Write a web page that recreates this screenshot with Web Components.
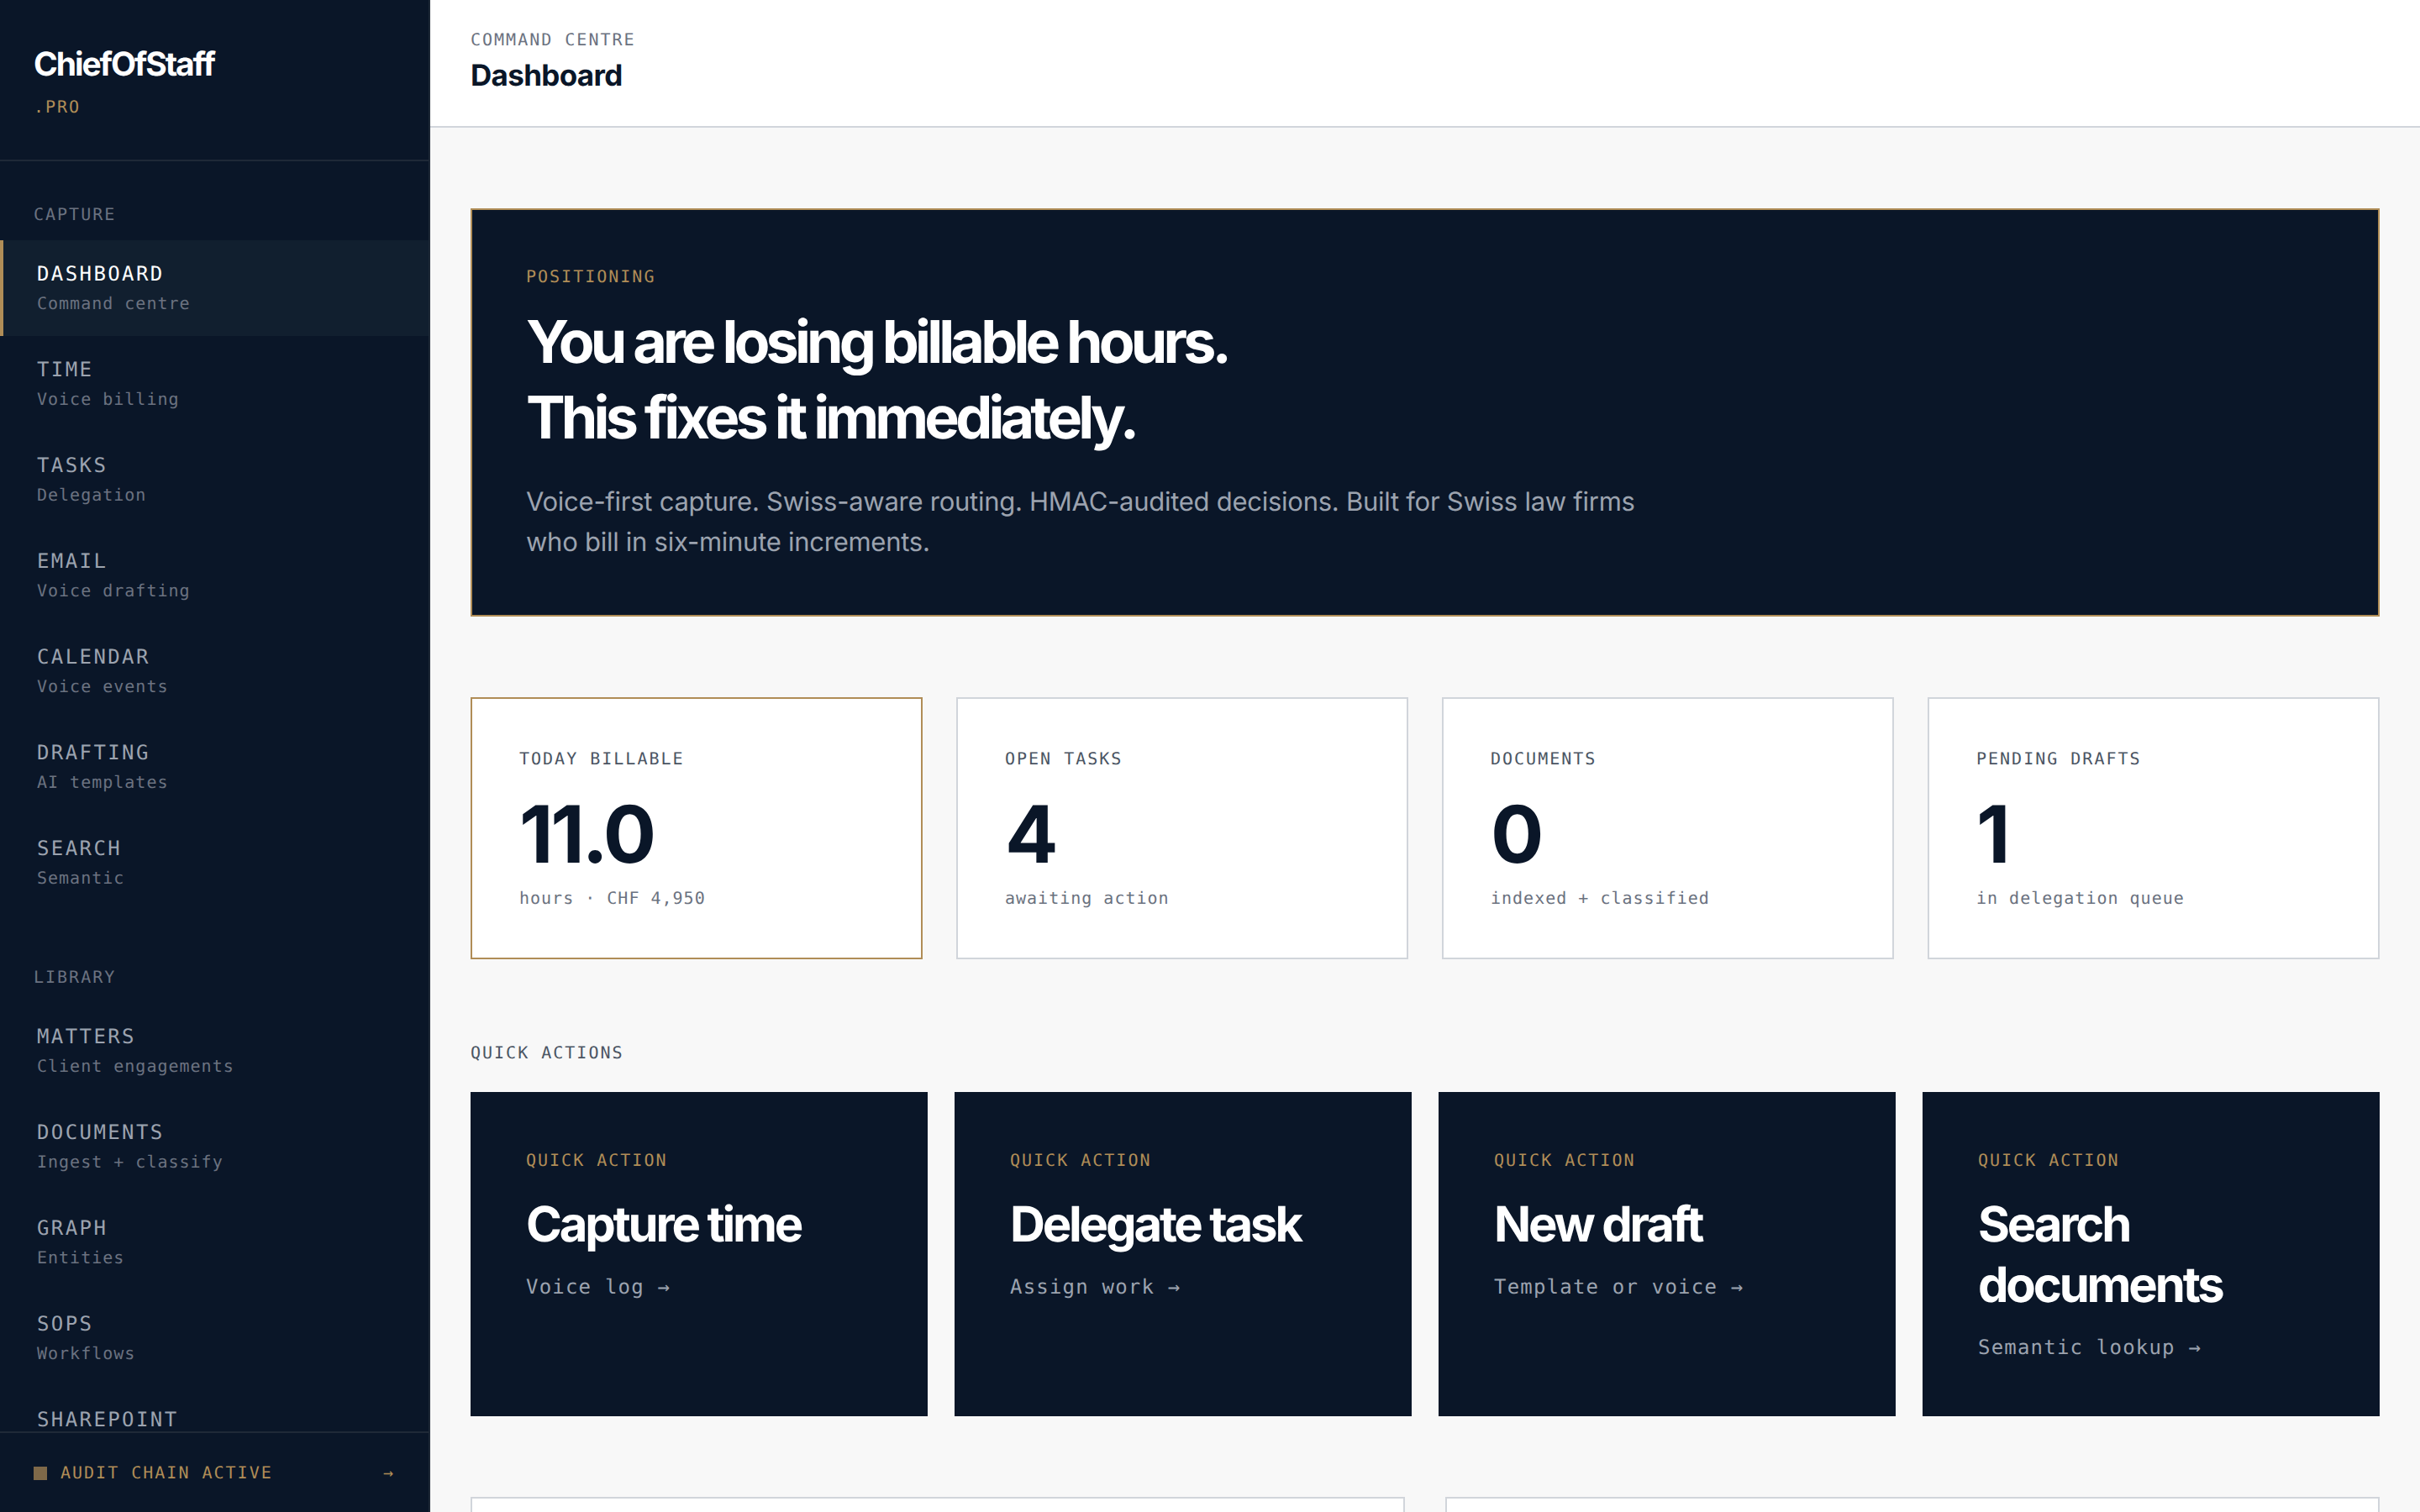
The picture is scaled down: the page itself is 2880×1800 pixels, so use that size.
<!DOCTYPE html>
<html lang="en">
<head>
<meta charset="utf-8">
<title>ChiefOfStaff.pro - Dashboard</title>
<style>
    :root {
        --navy: #0a1628;
        --navy-active: #111f2f;
        --navy-line: #1f2937;
        --gold: #b08d57;
        --paper: #f8f8f8;
        --line: #d1d5db;
        --slate: #4b5563;
        --muted: #6b7280;
        --soft: #9ca3af;
        --sans: Inter, "Liberation Sans", sans-serif;
        --mono: "DejaVu Sans Mono", "Liberation Mono", monospace;
    }

    body {
        margin: 0;
        height: 1800px;
        overflow: hidden;
        background-color: var(--paper);
        font-family: var(--sans);
        text-rendering: geometricPrecision;
    }
</style>
</head>
<body>
<app-shell>
    <side-bar slot="sidebar">
        <nav-group label="CAPTURE">
            <nav-item label="DASHBOARD" active>Command centre</nav-item>
            <nav-item label="TIME">Voice billing</nav-item>
            <nav-item label="TASKS">Delegation</nav-item>
            <nav-item label="EMAIL">Voice drafting</nav-item>
            <nav-item label="CALENDAR">Voice events</nav-item>
            <nav-item label="DRAFTING">AI templates</nav-item>
            <nav-item label="SEARCH">Semantic</nav-item>
        </nav-group>
        <nav-group label="LIBRARY">
            <nav-item label="MATTERS">Client engagements</nav-item>
            <nav-item label="DOCUMENTS">Ingest + classify</nav-item>
            <nav-item label="GRAPH">Entities</nav-item>
            <nav-item label="SOPS">Workflows</nav-item>
            <nav-item label="SHAREPOINT"></nav-item>
        </nav-group>
    </side-bar>

    <page-header slot="header" eyebrow="COMMAND CENTRE">Dashboard</page-header>

    <hero-banner eyebrow="POSITIONING">
        <span slot="title">You are losing billable hours.<br>This fixes it immediately.</span>
        Voice-first capture. Swiss-aware routing. HMAC-audited decisions. Built for Swiss law firms who bill in six-minute increments.
    </hero-banner>

    <card-grid style="--gap: 40px">
        <stat-card label="TODAY BILLABLE" value="11.0" highlight>hours · CHF 4,950</stat-card>
        <stat-card label="OPEN TASKS" value="4">awaiting action</stat-card>
        <stat-card label="DOCUMENTS" value="0">indexed + classified</stat-card>
        <stat-card label="PENDING DRAFTS" value="1">in delegation queue</stat-card>
    </card-grid>

    <card-grid heading="QUICK ACTIONS" style="--gap: 32px">
        <action-card label="Capture time">Voice log →</action-card>
        <action-card label="Delegate task">Assign work →</action-card>
        <action-card label="New draft">Template or voice →</action-card>
        <action-card label="Search documents">Semantic lookup →</action-card>
    </card-grid>

    <card-grid style="--columns: 2; --gap: 48px">
        <content-panel></content-panel>
        <content-panel></content-panel>
    </card-grid>
</app-shell>

<script>
// Small uppercase mono label, shared by most of the elements
const eyebrowStyle = `
    .eyebrow {
        font-family: var(--mono);
        font-size: 20px;
        line-height: 30px;
        letter-spacing: 0.1em;
    }
`;

class BaseElement extends HTMLElement {
    constructor() {
        super();
        this.attachShadow({ mode: "open" });
    }

    connectedCallback() {
        const template = document.createElement("template");
        template.innerHTML = `<style>:host, * { box-sizing: border-box; }${eyebrowStyle}</style>` + this.render();
        this.shadowRoot.replaceChildren(template.content.cloneNode(true));
    }

    attr(name) {
        return this.getAttribute(name) || "";
    }
}

class AppShell extends BaseElement {
    render() {
        return `
            <style>
                :host {
                    display: grid;
                    grid-template-columns: 512px 1fr;
                    height: 1800px;
                    overflow: hidden;
                }

                .content {
                    display: flex;
                    flex-direction: column;
                    min-width: 0;
                    height: 1800px;
                    overflow: hidden;
                }

                main {
                    display: flex;
                    flex-direction: column;
                    gap: 96px;
                    padding: 96px 48px;
                }
            </style>
            <slot name="sidebar"></slot>
            <div class="content">
                <slot name="header"></slot>
                <main><slot></slot></main>
            </div>
        `;
    }
}

class SideBar extends BaseElement {
    render() {
        return `
            <style>
                :host {
                    display: flex;
                    flex-direction: column;
                    height: 1800px;
                    background-color: var(--navy);
                    border-right: 2px solid var(--navy-line);
                }

                .brand {
                    padding: 49px 40px 48px;
                    border-bottom: 2px solid var(--navy-line);
                }

                .name {
                    color: white;
                    font-size: 39px;
                    font-weight: 700;
                    line-height: 56px;
                    letter-spacing: -0.054em;
                    margin-bottom: 7px;
                }

                .brand .eyebrow, footer {
                    color: var(--gold);
                }

                nav {
                    display: flex;
                    flex-direction: column;
                    gap: 64px;
                    flex: 1;
                    min-height: 0;
                    overflow: hidden;
                    padding-top: 48px;
                }

                footer {
                    display: flex;
                    align-items: center;
                    gap: 16px;
                    padding: 32px 40px;
                    border-top: 2px solid var(--navy-line);
                }

                .dot {
                    width: 16px;
                    height: 16px;
                    margin-top: 2px;
                    background-color: var(--gold);
                    opacity: 0.7;
                }

                .arrow {
                    margin-left: auto;
                }
            </style>
            <div class="brand">
                <div class="name">ChiefOfStaff</div>
                <div class="eyebrow">.PRO</div>
            </div>
            <nav><slot></slot></nav>
            <footer>
                <span class="dot"></span>
                <span class="eyebrow">AUDIT CHAIN ACTIVE</span>
                <span class="eyebrow arrow">→</span>
            </footer>
        `;
    }
}

class NavGroup extends BaseElement {
    render() {
        return `
            <style>
                :host {
                    display: block;
                }

                .eyebrow {
                    color: var(--muted);
                    padding: 0 40px;
                    margin-bottom: 16px;
                }
            </style>
            <div class="eyebrow">${this.attr("label")}</div>
            <slot></slot>
        `;
    }
}

class NavItem extends BaseElement {
    render() {
        return `
            <style>
                :host {
                    display: block;
                    height: 114px;
                    padding: 24px 40px;
                    border-left: 4px solid transparent;
                    font-family: var(--mono);
                    cursor: pointer;
                }

                :host([active]) {
                    background-color: var(--navy-active);
                    border-left-color: var(--gold);
                }

                .label {
                    color: var(--soft);
                    font-size: 24px;
                    line-height: 32px;
                    letter-spacing: 0.1em;
                    margin-bottom: 4px;
                }

                :host([active]) .label {
                    color: white;
                }

                .hint {
                    color: var(--muted);
                    font-size: 20px;
                    line-height: 30px;
                    letter-spacing: 0.05em;
                }
            </style>
            <div class="label">${this.attr("label")}</div>
            <div class="hint"><slot></slot></div>
        `;
    }
}

class PageHeader extends BaseElement {
    render() {
        return `
            <style>
                :host {
                    display: block;
                    flex: none;
                    height: 152px;
                    padding: 32px 48px 0;
                    background-color: white;
                    border-bottom: 2px solid var(--line);
                }

                .eyebrow {
                    color: var(--muted);
                }

                h1 {
                    margin: 1px 0 0;
                    color: var(--navy);
                    font-size: 35px;
                    font-weight: 700;
                    line-height: 54px;
                    letter-spacing: -0.019em;
                }
            </style>
            <div class="eyebrow">${this.attr("eyebrow")}</div>
            <h1><slot></slot></h1>
        `;
    }
}

class HeroBanner extends BaseElement {
    render() {
        return `
            <style>
                :host {
                    display: block;
                    padding: 64px;
                    background-color: var(--navy);
                    border: 2px solid var(--gold);
                }

                .eyebrow {
                    color: var(--gold);
                    margin-bottom: 18px;
                }

                h2 {
                    margin: 0 0 32px;
                    color: white;
                    font-size: 70px;
                    font-weight: 700;
                    line-height: 90px;
                    letter-spacing: -0.0695em;
                }

                p {
                    margin: 0 0 -2px;
                    max-width: 1344px;
                    color: var(--soft);
                    font-size: 31px;
                    line-height: 48px;
                    letter-spacing: -0.0085em;
                }
            </style>
            <div class="eyebrow">${this.attr("eyebrow")}</div>
            <h2><slot name="title"></slot></h2>
            <p><slot></slot></p>
        `;
    }
}

class CardGrid extends BaseElement {
    render() {
        const heading = this.attr("heading");
        return `
            <style>
                :host {
                    display: block;
                }

                .eyebrow {
                    color: var(--slate);
                    margin-bottom: 32px;
                }

                .grid {
                    display: grid;
                    grid-template-columns: repeat(var(--columns, 4), minmax(0, 1fr));
                    gap: var(--gap);
                }
            </style>
            ${heading ? `<div class="eyebrow">${heading}</div>` : ""}
            <div class="grid"><slot></slot></div>
        `;
    }
}

class StatCard extends BaseElement {
    render() {
        return `
            <style>
                :host {
                    display: block;
                    padding: 56px;
                    background-color: white;
                    border: 2px solid var(--line);
                }

                :host([highlight]) {
                    border-color: var(--gold);
                }

                .eyebrow {
                    color: var(--slate);
                }

                .value {
                    margin: 27px 0 13px;
                    color: var(--navy);
                    font-size: 94px;
                    font-weight: 700;
                    line-height: 96px;
                    letter-spacing: -0.035em;
                }

                .note {
                    color: var(--muted);
                    font-family: var(--mono);
                    font-size: 20px;
                    line-height: 30px;
                    letter-spacing: 0.05em;
                }
            </style>
            <div class="eyebrow">${this.attr("label")}</div>
            <div class="value">${this.attr("value")}</div>
            <div class="note"><slot></slot></div>
        `;
    }
}

class ActionCard extends BaseElement {
    render() {
        return `
            <style>
                :host {
                    display: block;
                    padding: 64px;
                    background-color: var(--navy);
                    border: 2px solid var(--navy);
                    cursor: pointer;
                }

                .eyebrow {
                    color: var(--gold);
                }

                h3 {
                    margin: 25px 0 23px;
                    color: white;
                    font-size: 58px;
                    font-weight: 700;
                    line-height: 72px;
                    letter-spacing: -0.055em;
                }

                .link {
                    color: var(--soft);
                    font-family: var(--mono);
                    font-size: 24px;
                    line-height: 32px;
                    letter-spacing: 0.05em;
                }
            </style>
            <div class="eyebrow">QUICK ACTION</div>
            <h3>${this.attr("label")}</h3>
            <div class="link"><slot></slot></div>
        `;
    }
}

class ContentPanel extends BaseElement {
    render() {
        return `
            <style>
                :host {
                    display: block;
                    min-height: 400px;
                    background-color: white;
                    border: 2px solid var(--line);
                }
            </style>
            <slot></slot>
        `;
    }
}

customElements.define("app-shell", AppShell);
customElements.define("side-bar", SideBar);
customElements.define("nav-group", NavGroup);
customElements.define("nav-item", NavItem);
customElements.define("page-header", PageHeader);
customElements.define("hero-banner", HeroBanner);
customElements.define("card-grid", CardGrid);
customElements.define("stat-card", StatCard);
customElements.define("action-card", ActionCard);
customElements.define("content-panel", ContentPanel);
</script>
</body>
</html>
